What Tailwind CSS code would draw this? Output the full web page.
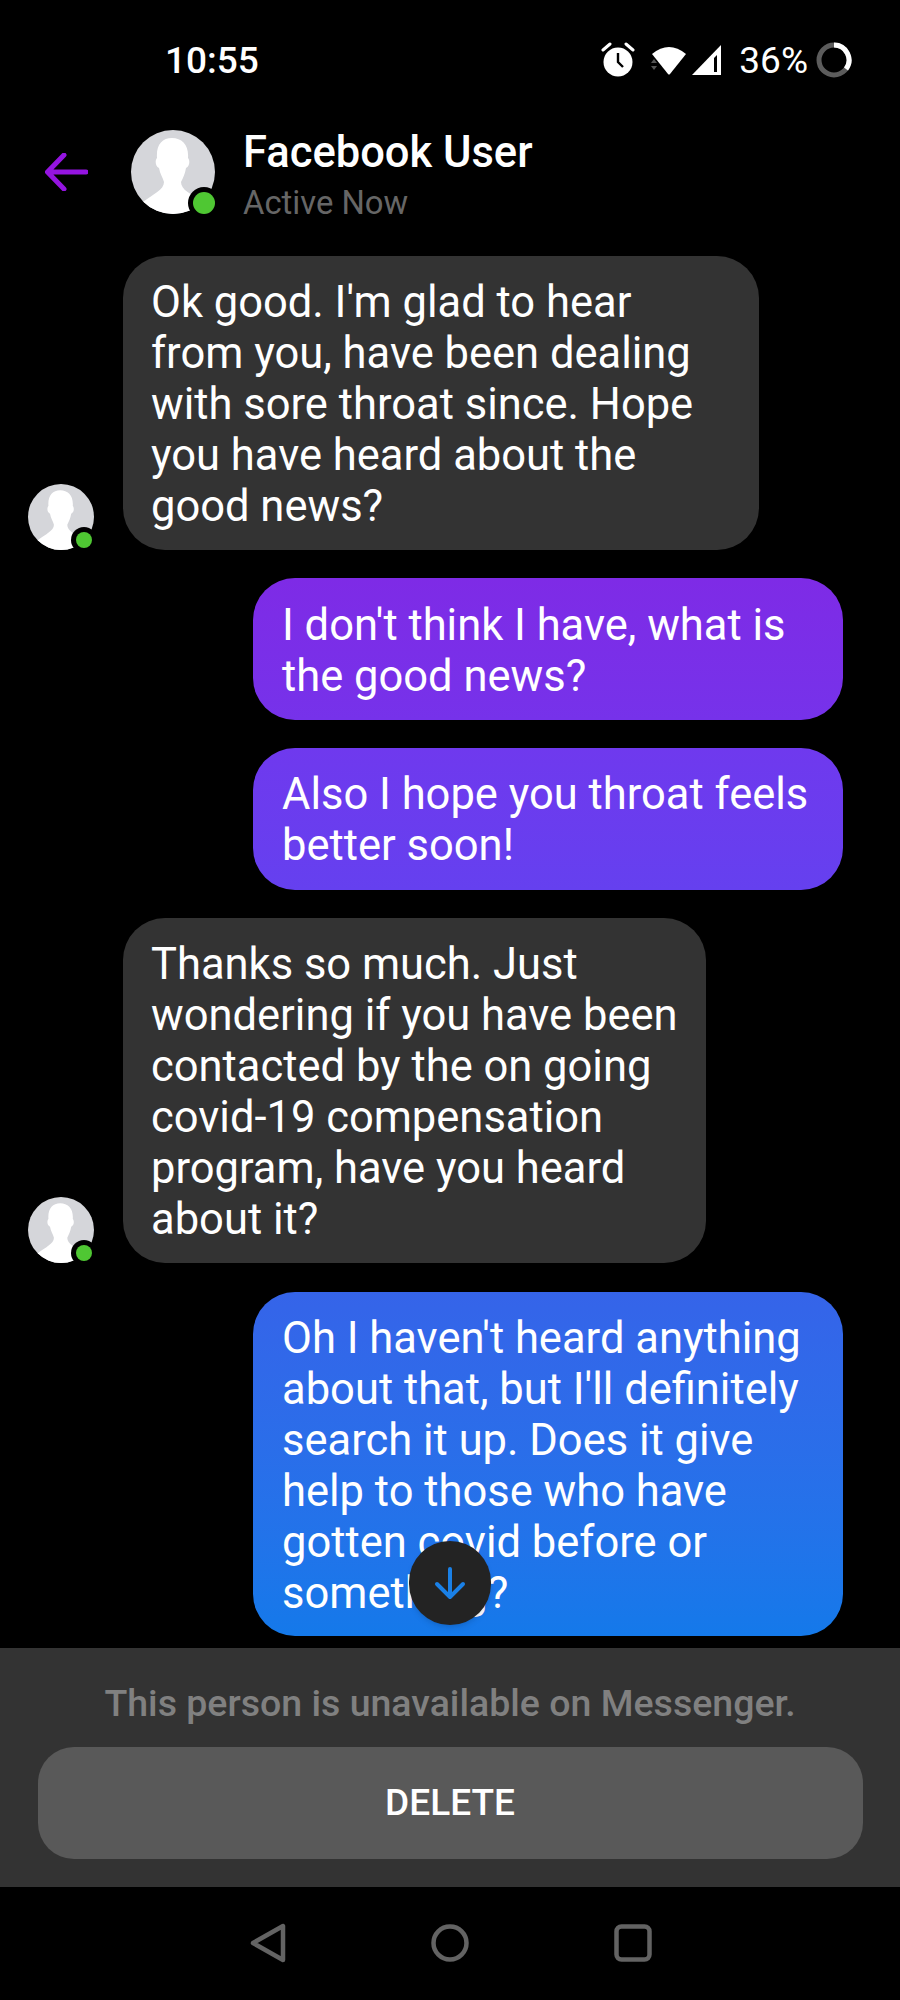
<!DOCTYPE html>
<html lang="en">
<head>
  <meta charset="UTF-8">
  <meta name="viewport" content="width=device-width, initial-scale=1.0">
  <script src="https://cdn.jsdelivr.net/npm/@tailwindcss/browser@4"></script>
  <title>Messenger</title>
</head>
<body class="bg-black">
  <main class="w-[900px] h-[2000px] bg-black overflow-hidden text-white font-['Roboto',sans-serif] relative">
    <!-- status bar -->
    <div class="h-[120px] flex items-center pl-[165px] pr-[48px] justify-between">
      <span class="text-[37px] font-medium leading-none">10:55</span>
      <div class="flex items-center">
        <svg class="w-[36px] h-[36px]" viewBox="0 0 36 36">
          <path d="M3 8 L10 2 M33 8 L26 2" stroke="#fff" stroke-width="3" stroke-linecap="round"/>
          <circle cx="18" cy="20" r="14.5" fill="#fff"/>
          <path d="M18 11 V20 L23 25" stroke="#000" stroke-width="2.4" fill="none"/>
        </svg>
        <svg class="w-[36px] h-[30px] ml-[15px]" viewBox="0 0 36 30">
          <path d="M1 8 Q18 -6 35 8 L19 28 Q18 29 17 28 Z" fill="#fff" transform="translate(0 1)"/>
          <path d="M0 18 L3 14 L6 18 Z M0 21 L6 21 L3 25 Z" fill="#555"/>
        </svg>
        <svg class="w-[32px] h-[32px] ml-[4px]" viewBox="0 0 32 32">
          <path d="M1 31 L30 1 V31 Z" fill="#fff"/>
          <path d="M26 11 V28 H23 V14 Z" fill="#000"/>
        </svg>
        <span class="text-[37px] leading-none ml-[16px]">36%</span>
        <svg class="w-[36px] h-[36px] ml-[8px]" viewBox="0 0 36 36">
          <circle cx="18" cy="18" r="15" fill="none" stroke="#5c5c5c" stroke-width="5"/>
          <path d="M18 3 A15 15 0 0 1 30 27" fill="none" stroke="#fff" stroke-width="5"/>
        </svg>
      </div>
    </div>

    <!-- header -->
    <div class="h-[136px] flex items-start pt-[10px] pl-[45px]">
      <svg class="w-[43px] h-[38px] mt-[23px]" viewBox="0 0 43 38" fill="none">
        <path d="M41 19 H3 M19 2 L2.500 19 L19 36" stroke="#9414e0" stroke-width="5" stroke-linecap="round" stroke-linejoin="round"/>
      </svg>
      <div class="relative w-[84px] h-[84px] ml-[43px]">
        <svg class="w-full h-full rounded-full" viewBox="0 0 84 84">
          <rect width="84" height="84" fill="#d5d6da"/>
          <path d="M41 8 C31 8 25 15 26 28 C24 30 24 36 28 38 C29 44 32 48 33 52 C33 60 22 64 12 72 L26 90 H70 V70 C60 64 50 60 50 52 C52 48 54 44 55 38 C59 36 59 30 57 28 C58 15 51 8 41 8 Z" fill="#fff"/>
        </svg>
        <span class="absolute right-[-5px] bottom-[-5px] w-[32px] h-[32px] rounded-full bg-black flex items-center justify-center">
          <span class="w-[22px] h-[22px] rounded-full bg-[#4fc733]"></span>
        </span>
      </div>
      <div class="ml-[28px] flex flex-col">
        <span class="text-[43.5px] font-medium leading-[46px]">Facebook User</span>
        <span class="text-[32.8px] leading-[36px] mt-[9px] text-[#666666]">Active Now</span>
      </div>
    </div>

    <!-- conversation -->
    <div class="h-[1392px] flex flex-col gap-[28px]">
      <div class="flex items-end pl-[28px]">
        <div class="relative w-[66px] h-[66px] shrink-0">
          <svg class="w-full h-full rounded-full" viewBox="0 0 84 84">
            <rect width="84" height="84" fill="#d5d6da"/>
            <path d="M41 8 C31 8 25 15 26 28 C24 30 24 36 28 38 C29 44 32 48 33 52 C33 60 22 64 12 72 L26 90 H70 V70 C60 64 50 60 50 52 C52 48 54 44 55 38 C59 36 59 30 57 28 C58 15 51 8 41 8 Z" fill="#fff"/>
          </svg>
          <span class="absolute right-[-3px] bottom-[-3px] w-[26px] h-[26px] rounded-full bg-black flex items-center justify-center">
            <span class="w-[16px] h-[16px] rounded-full bg-[#4fc733]"></span>
          </span>
        </div>
        <div class="ml-[29px] w-[636px] h-[294px] rounded-[42px] bg-[#333333] pl-[28px] pt-[21px] text-[43.5px] leading-[51px] whitespace-nowrap">Ok good. I'm glad to hear<br>from you, have been dealing<br>with sore throat since. Hope<br>you have heard about the<br>good news?</div>
      </div>

      <div class="flex justify-end pr-[57px]">
        <div class="w-[590px] h-[142px] rounded-[42px] bg-gradient-to-b from-[#7e2be6] to-[#7632ea] pl-[29px] pt-[22px] text-[43.5px] leading-[51px] whitespace-nowrap">I don't think I have, what is<br>the good news?</div>
      </div>

      <div class="flex justify-end pr-[57px]">
        <div class="w-[590px] h-[142px] rounded-[42px] bg-gradient-to-b from-[#6f39ee] to-[#6540ef] pl-[29px] pt-[21px] text-[43.5px] leading-[51px] whitespace-nowrap">Also I hope you throat feels<br>better soon!</div>
      </div>

      <div class="flex items-end pl-[28px]">
        <div class="relative w-[66px] h-[66px] shrink-0">
          <svg class="w-full h-full rounded-full" viewBox="0 0 84 84">
            <rect width="84" height="84" fill="#d5d6da"/>
            <path d="M41 8 C31 8 25 15 26 28 C24 30 24 36 28 38 C29 44 32 48 33 52 C33 60 22 64 12 72 L26 90 H70 V70 C60 64 50 60 50 52 C52 48 54 44 55 38 C59 36 59 30 57 28 C58 15 51 8 41 8 Z" fill="#fff"/>
          </svg>
          <span class="absolute right-[-3px] bottom-[-3px] w-[26px] h-[26px] rounded-full bg-black flex items-center justify-center">
            <span class="w-[16px] h-[16px] rounded-full bg-[#4fc733]"></span>
          </span>
        </div>
        <div class="ml-[29px] w-[583px] h-[345px] rounded-[42px] bg-[#333333] pl-[28px] pt-[21px] text-[43.5px] leading-[51px] whitespace-nowrap">Thanks so much. Just<br>wondering if you have been<br>contacted by the on going<br>covid-19 compensation<br>program, have you heard<br>about it?</div>
      </div>

      <div class="flex justify-end pr-[57px] mt-[1px]">
        <div class="w-[590px] h-[344px] rounded-[42px] bg-gradient-to-b from-[#3564e9] to-[#1479ea] pl-[29px] pt-[21px] text-[43.5px] leading-[51px] whitespace-nowrap">Oh I haven't heard anything<br>about that, but I'll definitely<br>search it up. Does it give<br>help to those who have<br>gotten covid before or<br>something?</div>
      </div>
    </div>

    <!-- scroll to bottom -->
    <div class="absolute left-[409px] top-[1541px] w-[82px] h-[84px] rounded-full bg-[#232323] shadow-md flex items-center justify-center">
      <svg class="w-[34px] h-[34px]" viewBox="0 0 34 34" fill="none">
        <path d="M17 3 V30 M4 18 L17 31 L30 18" stroke="#1a80e6" stroke-width="4" stroke-linecap="round" stroke-linejoin="round"/>
      </svg>
    </div>

    <!-- unavailable panel -->
    <div class="h-[239px] bg-[#333333] flex flex-col items-center pt-[35px]">
      <div class="text-[37.5px] font-medium leading-[40px] text-[#808080]">This person is unavailable on Messenger.</div>
      <div class="mt-[24px] w-[825px] h-[112px] rounded-[36px] bg-[#595959] flex items-center justify-center text-[37px] font-medium">DELETE</div>
    </div>

    <!-- nav bar -->
    <div class="h-[113px] flex items-center pl-[250px] pb-[1px]">
      <svg class="w-[36px] h-[40px]" viewBox="0 0 36 40" fill="none">
        <path d="M33 3 V37 L3 20 Z" stroke="#636363" stroke-width="4.500" stroke-linejoin="round"/>
      </svg>
      <svg class="w-[38px] h-[38px] ml-[145px]" viewBox="0 0 38 38" fill="none">
        <circle cx="19" cy="19" r="16.500" stroke="#636363" stroke-width="4.500"/>
      </svg>
      <svg class="w-[38px] h-[38px] ml-[145px]" viewBox="0 0 38 38" fill="none">
        <rect x="2.500" y="2.500" width="33" height="33" rx="5" stroke="#636363" stroke-width="4.500"/>
      </svg>
    </div>
  </main>
</body>
</html>
